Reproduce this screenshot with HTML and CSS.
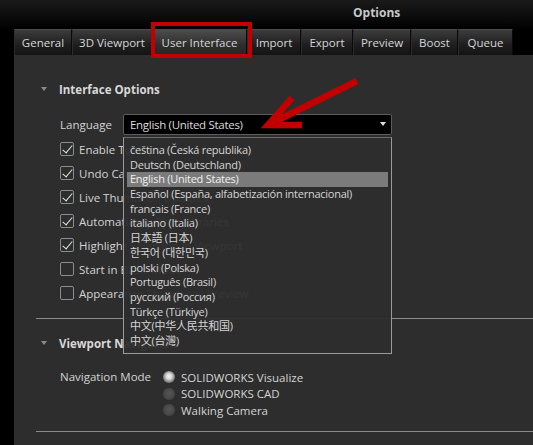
FILE: index.html
```html
<!DOCTYPE html>
<html>
<head>
<meta charset="utf-8">
<link rel="stylesheet" href="styles.css">
</head>
<body>
<div class="window">
  <div class="titlebar"><span class="title">Options</span></div>
  <div class="tabs">
    <div class="tab">General</div>
    <div class="tab">3D Viewport</div>
    <div class="tab active">User Interface</div>
    <div class="tab">Import</div>
    <div class="tab">Export</div>
    <div class="tab">Preview</div>
    <div class="tab">Boost</div>
    <div class="tab">Queue</div>
  </div>
  <div class="panel">
    <div class="section">
      <div class="sec-head"><span class="tri"></span>Interface Options</div>
      <div class="lang-row">
        <span class="label">Language</span>
        <div class="select"><span class="sel-text">English (United States)</span><span class="sel-arrow"></span></div>
      </div>
      <div class="checks">
        <div class="check-row"><span class="box on"></span>Enable Tooltips</div>
        <div class="check-row"><span class="box on"></span>Undo Camera Changes</div>
        <div class="check-row"><span class="box on"></span>Live Thumbnail Updates</div>
        <div class="check-row"><span class="box on"></span>Automatically Sync Libraries</div>
        <div class="check-row"><span class="box on"></span>Highlight Selection in Viewport</div>
        <div class="check-row"><span class="box"></span>Start in Basic Mode</div>
        <div class="check-row"><span class="box"></span>Appearance Thumbnail Preview</div>
      </div>
    </div>
    <div class="sep"></div>
    <div class="section">
      <div class="sec-head sec2"><span class="tri"></span>Viewport Navigation</div>
      <div class="nav-row">
        <span class="label nav-label">Navigation Mode</span>
        <div class="radios">
          <div class="radio-row"><span class="radio on"></span>SOLIDWORKS Visualize</div>
          <div class="radio-row"><span class="radio"></span>SOLIDWORKS CAD</div>
          <div class="radio-row"><span class="radio"></span>Walking Camera</div>
        </div>
      </div>
    </div>
    <div class="sep sep2"></div>
  </div>

  <ul class="dropdown">
    <li>čeština (Česká republika)</li>
    <li>Deutsch (Deutschland)</li>
    <li class="hl">English (United States)</li>
    <li>Español (España, alfabetización internacional)</li>
    <li>français (France)</li>
    <li>italiano (Italia)</li>
    <li>日本語 (日本)</li>
    <li>한국어 (대한민국)</li>
    <li>polski (Polska)</li>
    <li>Português (Brasil)</li>
    <li>русский (Россия)</li>
    <li>Türkçe (Türkiye)</li>
    <li>中文(中华人民共和国)</li>
    <li>中文(台灣)</li>
  </ul>

  <div class="redbox"></div>
  <svg class="arrow" width="533" height="445" viewBox="0 0 533 445">
    <line x1="357" y1="81" x2="272" y2="123" stroke="#c30000" stroke-width="6.5" stroke-linecap="butt"/>
    <polyline points="292,98 268,125 302,125" fill="none" stroke="#c30000" stroke-width="6.5" stroke-linejoin="miter"/>
  </svg>
</div>
</body>
</html>
```
FILE: styles.css
```css
* { box-sizing: border-box; }
html, body { margin: 0; padding: 0; }
body {
  background: #000;
  font-family: "Open Sans", "Noto Sans CJK SC", "Noto Sans CJK KR", sans-serif;
  font-size: 11.5px;
  color: #d4d4d4;
}
.window {
  position: relative;
  width: 533px;
  height: 445px;
  overflow: hidden;
  background: linear-gradient(#1a1a1a, #000 30px);
}
.titlebar {
  height: 29px;
  padding-left: 353px;
  display: flex;
  align-items: center;
}
.title {
  font-weight: 700;
  color: #c8c8c8;
  font-size: 12px;
  margin-top: -5px;
}
.tabs {
  display: flex;
  margin-left: 14px;
  height: 26px;
}
.tab {
  height: 26px;
  display: flex;
  align-items: center;
  justify-content: center;
  white-space: nowrap;
  background: linear-gradient(#3c3c3c, #1e1e1e 60%, #141414);
  border-top: 1px solid #4a4a4a;
  border-right: 1px solid #0a0a0a;
  border-left: 1px solid #2c2c2c;
  color: #d6d6d6;
  font-size: 11.5px;
}
.tab:nth-child(1) { width: 58px; }
.tab:nth-child(2) { width: 80px; }
.tab:nth-child(3) { width: 95px; }
.tab:nth-child(4) { width: 54px; }
.tab:nth-child(5) { width: 52px; }
.tab:nth-child(6) { width: 58px; }
.tab:nth-child(7) { width: 47px; }
.tab:nth-child(8) { width: 55px; }
.tab.active {
  background: linear-gradient(#4c4c4c, #2e2e2e 60%, #262626);
}
.panel {
  margin-left: 14px;
  background: #2d2d2d;
  height: 390px;
  padding-top: 25px;
}
.sec-head {
  display: flex;
  align-items: center;
  height: 18px;
  padding-left: 27px;
  font-weight: 700;
  color: #d8d8d8;
  font-size: 11.5px;
}
.tri {
  width: 0; height: 0;
  border-left: 3.5px solid transparent;
  border-right: 3.5px solid transparent;
  border-top: 4px solid #8a8a8a;
  margin-right: 12px;
}
.lang-row {
  display: flex;
  align-items: center;
  margin-top: 16px;
  padding-left: 46px;
  height: 20px;
}
.label { width: 63px; }
.select {
  width: 269px;
  height: 21px;
  background: #000;
  border: 1px solid #5c5c5c;
  border-radius: 2px;
  display: flex;
  align-items: center;
  justify-content: space-between;
  padding: 0 5px 0 6px;
  color: #dcdcdc;
}
.sel-text { letter-spacing: -0.3px; }
.sel-arrow {
  width: 0; height: 0;
  border-left: 3.5px solid transparent;
  border-right: 3.5px solid transparent;
  border-top: 4px solid #e0e0e0;
}
.checks { margin-top: 3px; padding-left: 46px; }
.check-row {
  height: 24px;
  display: flex;
  align-items: center;
  white-space: nowrap;
}
.box {
  width: 14px; height: 14px;
  border: 1px solid #8c8c8c;
  border-radius: 2px;
  margin-right: 5px;
  position: relative;
  flex: none;
}
.box.on::after {
  content: "";
  position: absolute;
  left: 4px; top: 0px;
  width: 4px; height: 9px;
  border-right: 1.6px solid #e8e8e8;
  border-bottom: 1.6px solid #e8e8e8;
  transform: rotate(40deg);
}
.sep {
  margin-left: 22px;
  height: 1px;
  background: #8a8a8a;
  margin-top: 13px;
}
.sec2 { margin-top: 15px; }
.nav-row {
  display: flex;
  padding-left: 46px;
  margin-top: 17px;
}
.nav-label { width: 103px; line-height: 16px; }
.radios { display: flex; flex-direction: column; }
.radio-row {
  height: 16.5px;
  display: flex;
  align-items: center;
}
.radio {
  width: 12px; height: 12px;
  border-radius: 50%;
  background: radial-gradient(circle at 50% 45%, #555 0, #464646 60%, #3a3a3a 100%);
  margin-right: 6px;
}
.radio.on {
  background: radial-gradient(circle at 50% 45%, #f4f4f4 0, #dadada 30%, #8a8a8a 60%, #4a4a4a 100%);
}
.sep2 { margin-top: 12px; }
.dropdown {
  position: absolute;
  left: 123px;
  top: 137px;
  width: 269px;
  height: 217px;
  margin: 0;
  padding: 5px 3px 0 3px;
  list-style: none;
  font-size: 11px;
  letter-spacing: -0.25px;
  background: rgba(45, 45, 45, 0.95);
  border: 1px solid #9a9a9a;
  border-top-color: #6a6a6a;
}
.dropdown li {
  height: 14.7px;
  line-height: 14.7px;
  padding-left: 3px;
  color: #d6d6d6;
  white-space: nowrap;
}
.dropdown li.hl { background: #7b7b7b; color: #f0f0f0; }
.redbox {
  position: absolute;
  left: 151px;
  top: 22px;
  width: 101px;
  height: 36px;
  border: 4px solid #c20000;
}
.arrow {
  position: absolute;
  left: 0; top: 0;
}
```
